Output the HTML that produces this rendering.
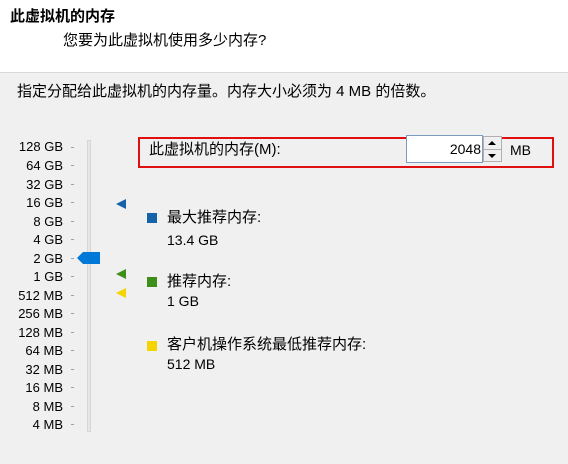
<!DOCTYPE html>
<html><head><meta charset="utf-8"><style>
body{margin:0;width:568px;height:464px;background:#f0f0f0;font-family:"Liberation Sans","Noto Sans CJK SC",sans-serif;font-size:15px;color:#000;position:relative;overflow:hidden}
.a{position:absolute;white-space:nowrap;line-height:16px}
.n{font-size:14px}
.hdr{position:absolute;left:0;top:0;width:568px;height:72px;background:#fff;border-bottom:1px solid #d9d9d9}
.lbl{position:absolute;right:505px;font-size:13px;line-height:15px}
.tk{position:absolute;left:71px;width:3px;height:1px;background:#a0a0a0}
.sq{position:absolute;width:10px;height:10px}
</style></head><body>
<div class="hdr"></div>
<div class="a" style="left:10px;top:9px;font-weight:bold">此虚拟机的内存</div>
<div class="a" style="left:63px;top:33px">您要为此虚拟机使用多少内存?</div>
<div class="a" style="left:17px;top:84px">指定分配给此虚拟机的内存量。内存大小必须为 4 MB 的倍数。</div>

<div class="lbl" style="top:139px">128 GB</div>
<div class="lbl" style="top:158px">64 GB</div>
<div class="lbl" style="top:177px">32 GB</div>
<div class="lbl" style="top:195px">16 GB</div>
<div class="lbl" style="top:214px">8 GB</div>
<div class="lbl" style="top:232px">4 GB</div>
<div class="lbl" style="top:251px">2 GB</div>
<div class="lbl" style="top:269px">1 GB</div>
<div class="lbl" style="top:288px">512 MB</div>
<div class="lbl" style="top:306px">256 MB</div>
<div class="lbl" style="top:325px">128 MB</div>
<div class="lbl" style="top:343px">64 MB</div>
<div class="lbl" style="top:362px">32 MB</div>
<div class="lbl" style="top:380px">16 MB</div>
<div class="lbl" style="top:399px">8 MB</div>
<div class="lbl" style="top:417px">4 MB</div>

<div class="tk" style="top:147px"></div><div class="tk" style="top:165px"></div><div class="tk" style="top:184px"></div><div class="tk" style="top:202px"></div><div class="tk" style="top:221px"></div><div class="tk" style="top:239px"></div><div class="tk" style="top:258px"></div><div class="tk" style="top:276px"></div><div class="tk" style="top:295px"></div><div class="tk" style="top:313px"></div><div class="tk" style="top:332px"></div><div class="tk" style="top:350px"></div><div class="tk" style="top:369px"></div><div class="tk" style="top:387px"></div><div class="tk" style="top:406px"></div><div class="tk" style="top:424px"></div>

<div style="position:absolute;left:87px;top:140px;width:4px;height:292px;background:#e6e6e6;border:1px solid #d6d6d6;box-sizing:border-box"></div>
<svg class="a" style="left:76px;top:251px" width="25" height="14"><path d="M1 7 L7 1 H24 V13 H7 Z" fill="#0078d7"/></svg>
<svg class="a" style="left:115px;top:198px" width="12" height="12"><path d="M11 1 V11 L1 6 Z" fill="#1463a8"/></svg>
<svg class="a" style="left:115px;top:268px" width="12" height="12"><path d="M11 1 V11 L1 6 Z" fill="#3d8f1a"/></svg>
<svg class="a" style="left:115px;top:287px" width="12" height="12"><path d="M11 1 V11 L1 6 Z" fill="#f5d400"/></svg>

<div style="position:absolute;left:138px;top:137px;width:416px;height:31px;border:2px solid #e01010;box-sizing:border-box"></div>
<div class="a" style="left:149px;top:142px">此虚拟机的内存(M):</div>
<div style="position:absolute;left:406px;top:135px;width:77px;height:28px;background:#fff;border:1px solid #7a9cc0;box-sizing:border-box"></div>
<div class="a n" style="right:87px;top:141px">2048</div>
<div style="position:absolute;left:483px;top:136px;width:19px;height:26px;border:1px solid #b0b0b0;box-sizing:border-box;background:#f0f0f0"></div>
<div style="position:absolute;left:484px;top:149px;width:17px;height:1px;background:#b0b0b0"></div>
<svg class="a" style="left:487px;top:140px" width="10" height="6"><path d="M1 5 L5 1 L9 5 Z" fill="#000"/></svg>
<svg class="a" style="left:487px;top:153px" width="10" height="6"><path d="M1 1 L5 5 L9 1 Z" fill="#000"/></svg>
<div class="a n" style="left:510px;top:142px">MB</div>

<div class="sq" style="left:147px;top:213px;background:#1463a8"></div>
<div class="a" style="left:167px;top:210px">最大推荐内存:</div>
<div class="a n" style="left:167px;top:232px">13.4 GB</div>
<div class="sq" style="left:147px;top:277px;background:#3d8f1a"></div>
<div class="a" style="left:167px;top:274px">推荐内存:</div>
<div class="a n" style="left:167px;top:293px">1 GB</div>
<div class="sq" style="left:147px;top:341px;background:#f5d400"></div>
<div class="a" style="left:167px;top:337px">客户机操作系统最低推荐内存:</div>
<div class="a n" style="left:167px;top:356px">512 MB</div>
</body></html>
